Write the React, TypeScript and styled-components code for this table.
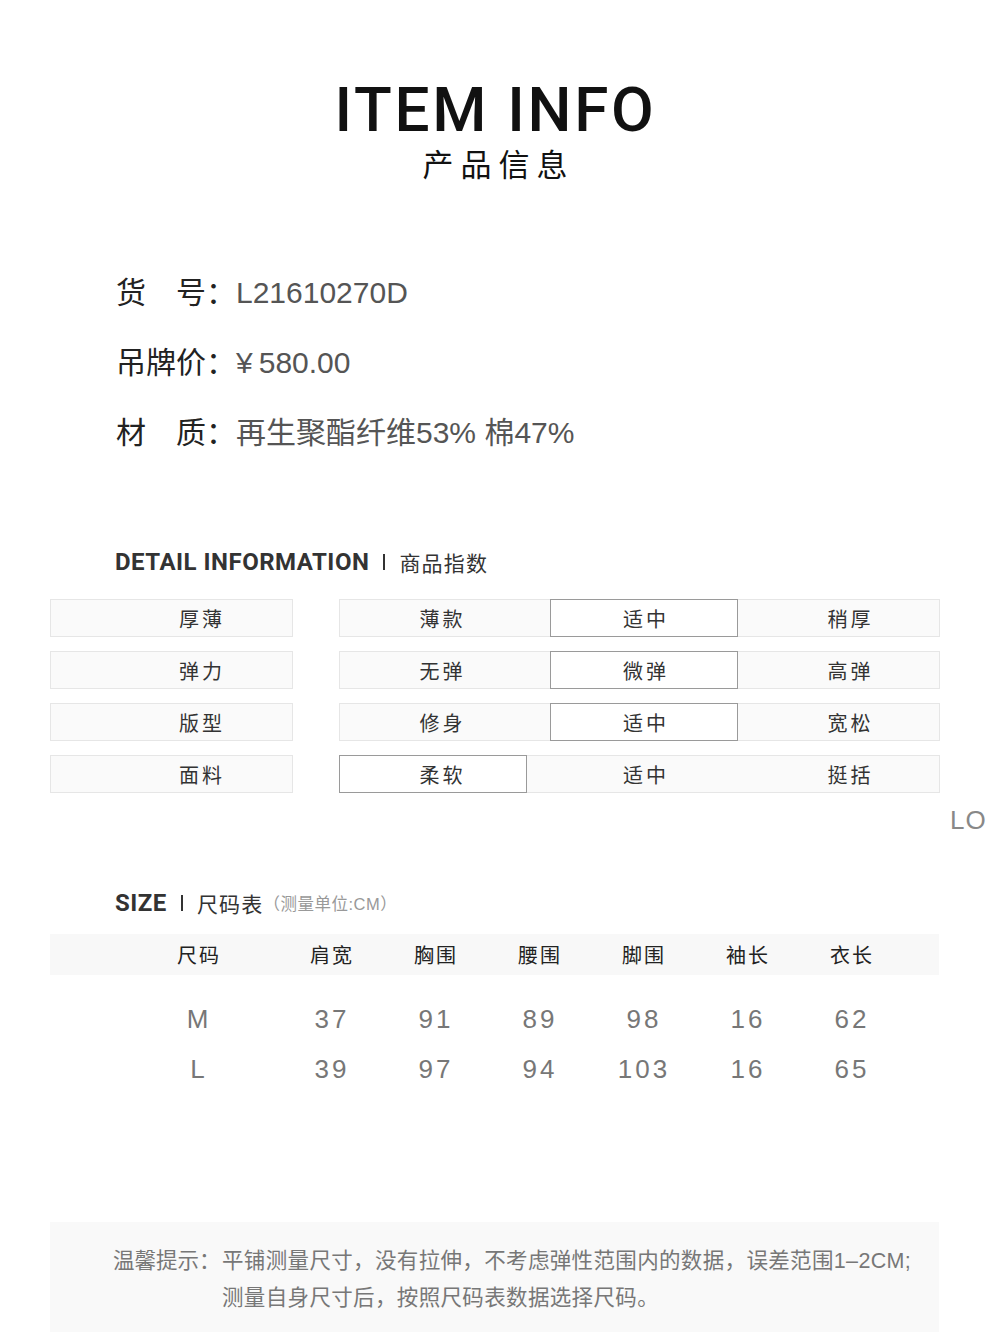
import React from 'react'
import styled, { createGlobalStyle } from 'styled-components'

const GlobalStyle = createGlobalStyle`
  html, body {
    margin: 0;
    padding: 0;
    background: #fff;
  }
  body {
    font-family: "Liberation Sans", "Noto Sans CJK SC", sans-serif;
    color: #222;
  }
`

const CJK = `"Liberation Sans", "Noto Sans CJK SC", sans-serif`

const Page = styled.div`
  width: 990px;
  height: 1332px;
  overflow: hidden;
  box-sizing: border-box;
  padding-top: 78px;
`

const Hero = styled.div`
  display: flex;
  flex-direction: column;
  align-items: center;
  padding-left: 1px;
`

const HeroTitle = styled.h1`
  margin: 0;
  font-family: "Roboto", "Liberation Sans", sans-serif;
  font-weight: 500;
  font-size: 62px;
  line-height: 64px;
  letter-spacing: 2.7px;
  color: #111;
`

const HeroSub = styled.div`
  margin-top: 4px;
  font-family: ${CJK};
  font-size: 31px;
  line-height: 40px;
  letter-spacing: 7px;
  padding-left: 6px;
  color: #111;
`

const InfoList = styled.div`
  margin-top: 87px;
  padding-left: 116px;
  display: flex;
  flex-direction: column;
  gap: 30px;
`

const InfoRow = styled.div`
  display: flex;
  align-items: center;
  height: 40px;
  line-height: 40px;
  font-family: ${CJK};
  font-size: 30px;
`

const InfoLabel = styled.span`
  display: flex;
  justify-content: space-between;
  width: 90px;
  color: #222;
`

const Colon = styled.span`
  width: 30px;
  text-align: center;
  color: #222;
`

const InfoValue = styled.span`
  color: #555;
`

const SectionHead = styled.div<{ $top: number }>`
  margin-top: ${p => p.$top}px;
  padding-left: 115px;
  display: flex;
  align-items: center;
  height: 30px;
`

const HeadEn = styled.span`
  font-family: "Roboto", "Liberation Sans", sans-serif;
  font-weight: 700;
  font-size: 24px;
  letter-spacing: 0.5px;
  color: #333;
`

const HeadBar = styled.span`
  width: 2px;
  height: 16px;
  background: #333;
  margin: 0 14px 0 14px;
`

const HeadCn = styled.span`
  font-family: ${CJK};
  font-size: 21px;
  letter-spacing: 1.2px;
  color: #333;
`

const HeadNote = styled.span`
  font-family: ${CJK};
  font-size: 16.5px;
  color: #999;
  letter-spacing: 0.5px;
`

const DetailGrid = styled.div`
  margin-top: 22px;
  padding-left: 50px;
  display: flex;
  flex-direction: column;
  gap: 14px;
`

const DetailRow = styled.div`
  display: flex;
  gap: 46px;
  height: 38px;
`

const cell = `
  box-sizing: border-box;
  background: #fafafa;
  border: 1px solid #e6e6e6;
  font-family: ${CJK};
  font-size: 20px;
  letter-spacing: 3px;
  color: #333;
`

const LabelCell = styled.div`
  ${cell}
  width: 243px;
  display: flex;
  align-items: center;
  justify-content: center;
  padding-left: 61px;
`

const Options = styled.div`
  ${cell}
  position: relative;
  width: 601px;
  display: grid;
  grid-template-columns: 202px 205px 1fr;
  align-items: center;
`

const Marker = styled.div`
  position: absolute;
  top: -1px;
  bottom: -1px;
  width: 188px;
  box-sizing: border-box;
  border: 1px solid #9a9a9a;
  background: #fff;
`

const Option = styled.span<{ $pad?: number }>`
  position: relative;
  text-align: center;
  padding-left: ${p => (p.$pad || 0) + 3}px;
`

const Brand = styled.div`
  margin-top: 12px;
  padding-left: 950px;
  white-space: nowrap;
  font-family: "Liberation Sans", sans-serif;
  font-size: 26px;
  line-height: 30px;
  letter-spacing: 1px;
  color: #888;
`

const SizeTable = styled.div`
  margin-top: 16px;
  margin-left: 50px;
  width: 889px;
`

const SizeRow = styled.div<{ $head?: boolean }>`
  display: grid;
  grid-template-columns: 146px repeat(6, 104px);
  align-items: center;
  padding-left: 84px;
  height: ${p => (p.$head ? 41 : 50)}px;
  background: ${p => (p.$head ? '#f8f8f8' : 'transparent')};
  margin-bottom: ${p => (p.$head ? 19 : 0)}px;
`

const SizeCell = styled.span<{ $head?: boolean; $first?: boolean }>`
  text-align: center;
  padding-right: ${p => (p.$first ? 16 : 0)}px;
  font-family: ${CJK};
  font-size: ${p => (p.$head ? 20 : 26)}px;
  letter-spacing: ${p => (p.$head ? 2 : 3)}px;
  color: ${p => (p.$head ? '#222' : '#777')};
`

const Tips = styled.div`
  margin-top: 128px;
  margin-left: 50px;
  width: 889px;
  height: 112px;
  box-sizing: border-box;
  background: #f9f9f9;
  padding: 21px 0 0 63px;
  display: flex;
  font-family: ${CJK};
  font-size: 21.5px;
  line-height: 37px;
  color: #777;
  white-space: nowrap;
`

const TipsLabel = styled.span`
  flex: none;
  width: 109px;
`

const TipsText = styled.div`
  letter-spacing: 0.35px;
`

const info = [
  { label: ['货', '号'], value: 'L21610270D' },
  { label: ['吊', '牌', '价'], value: '¥\u2009580.00' },
  { label: ['材', '质'], value: '再生聚酯纤维53% 棉47%' },
]

const details = [
  { label: '厚薄', options: ['薄款', '适中', '稍厚'], pick: 1 },
  { label: '弹力', options: ['无弹', '微弹', '高弹'], pick: 1 },
  { label: '版型', options: ['修身', '适中', '宽松'], pick: 1 },
  { label: '面料', options: ['柔软', '适中', '挺括'], pick: 0 },
]

const sizeHead = ['尺码', '肩宽', '胸围', '腰围', '脚围', '袖长', '衣长']
const sizes = [
  ['M', '37', '91', '89', '98', '16', '62'],
  ['L', '39', '97', '94', '103', '16', '65'],
]

const markerLeft = [0, 211]

export default function App() {
  return (
    <Page>
      <GlobalStyle />
      <Hero>
        <HeroTitle>ITEM INFO</HeroTitle>
        <HeroSub>产品信息</HeroSub>
      </Hero>

      <InfoList>
        {info.map(row => (
          <InfoRow key={row.value}>
            <InfoLabel>
              {row.label.map(c => <span key={c}>{c}</span>)}
            </InfoLabel>
            <Colon>：</Colon>
            <InfoValue>{row.value}</InfoValue>
          </InfoRow>
        ))}
      </InfoList>

      <SectionHead $top={94}>
        <HeadEn>DETAIL INFORMATION</HeadEn>
        <HeadBar />
        <HeadCn>商品指数</HeadCn>
      </SectionHead>

      <DetailGrid>
        {details.map(d => (
          <DetailRow key={d.label}>
            <LabelCell>{d.label}</LabelCell>
            <Options>
              <Marker style={{ left: markerLeft[d.pick] - 1 }} />
              {d.options.map((o, i) => (
                <Option key={o + i} $pad={i === 2 ? 12 : 0}>{o}</Option>
              ))}
            </Options>
          </DetailRow>
        ))}
      </DetailGrid>

      <Brand>LO</Brand>

      <SectionHead $top={53}>
        <HeadEn>SIZE</HeadEn>
        <HeadBar />
        <HeadCn>尺码表</HeadCn>
        <HeadNote>（测量单位:CM）</HeadNote>
      </SectionHead>

      <SizeTable>
        <SizeRow $head>
          {sizeHead.map((h, i) => (
            <SizeCell key={h} $head $first={i === 0}>{h}</SizeCell>
          ))}
        </SizeRow>
        {sizes.map(r => (
          <SizeRow key={r[0]}>
            {r.map((v, i) => (
              <SizeCell key={i} $first={i === 0}>{v}</SizeCell>
            ))}
          </SizeRow>
        ))}
      </SizeTable>

      <Tips>
        <TipsLabel>温馨提示：</TipsLabel>
        <TipsText>
          平铺测量尺寸，没有拉伸，不考虑弹性范围内的数据，误差范围1–2CM;
          <br />
          测量自身尺寸后，按照尺码表数据选择尺码。
        </TipsText>
      </Tips>
    </Page>
  )
}
